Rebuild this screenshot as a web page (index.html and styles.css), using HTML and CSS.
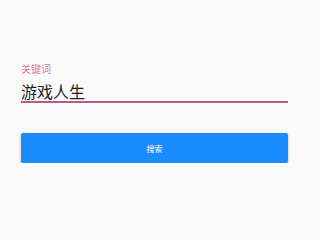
FILE: index.html
```html
<!DOCTYPE html>
<html lang="zh">
<head>
<meta charset="utf-8">
<link rel="stylesheet" href="styles.css">
</head>
<body>
<main class="form">
  <label class="field">
    <span class="field-label">关键词</span>
    <span class="field-input">游戏人生</span>
  </label>
  <button class="btn-search" type="button">搜索</button>
</main>
</body>
</html>
```
FILE: styles.css
```css
html, body {
  margin: 0;
  padding: 0;
  background: #fafafb;
  font-family: "Noto Sans CJK SC", "Noto Sans", sans-serif;
}
.form {
  display: flex;
  flex-direction: column;
  width: 267px;
  padding: 63px 21px 0 21px;
}
.field {
  display: flex;
  flex-direction: column;
}
.field-label {
  font-size: 10px;
  line-height: 12px;
  color: #d77aa6;
}
.field-input {
  margin-top: 6px;
  font-size: 16px;
  line-height: 20px;
  color: #1e1e1e;
  border-bottom: 2px solid #b05e90;
}
.btn-search {
  margin-top: 30px;
  height: 30px;
  border: none;
  border-radius: 2px;
  background: #1a8cff;
  color: #ffffff;
  font-family: inherit;
  font-size: 8px;
  padding: 0;
  box-shadow: 0 1px 3px rgba(0, 0, 0, 0.25);
}
```
